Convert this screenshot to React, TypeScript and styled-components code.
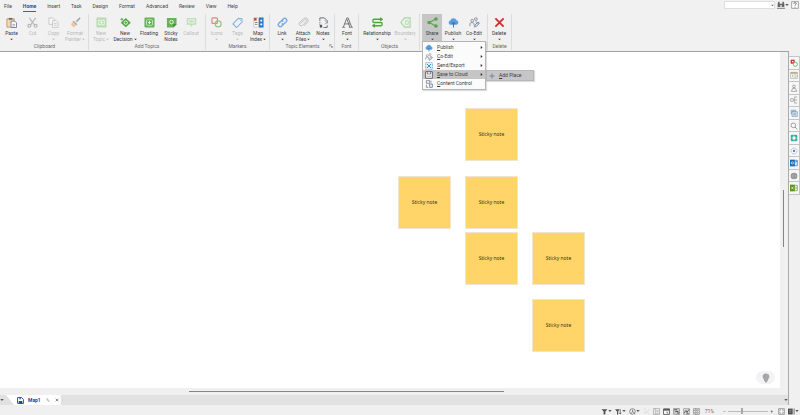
import React from "react";
import styled, { createGlobalStyle } from "styled-components";

const GlobalStyle = createGlobalStyle`
  * { box-sizing: border-box; }
  html, body, #root { height: 100%; }
  body { margin: 0; overflow: hidden; background: #f0f0f0; }
  body, button, input { font-family: Roboto, "Liberation Sans", sans-serif; font-size: 5px; line-height: 7px; color: #3c3c3c; }
  button { border: 0; padding: 0; margin: 0; background: none; }
`;

/* ---------- icons ---------- */

const icons: Record<string, React.ReactNode> = {
  paste: (
    <>
      <path d="M1 2h8v9H1z" fill="#f3d9b4" stroke="#c39a62" />
      <path d="M3 1h4v2H3z" fill="#6d6d6d" />
      <path d="M5.500 4.500h4l2 2v5h-6z" fill="#fff" stroke="#75789a" />
      <path d="M7 8h3M7 9.700h3" stroke="#75789a" strokeWidth=".7" />
    </>
  ),
  cut: (
    <g fill="none" stroke="#b5b5b5" strokeWidth="1.200">
      <path d="M2.500 1l5.800 8M9.500 1L3.700 9" />
      <circle cx="2.600" cy="9.600" r="1.600" />
      <circle cx="9.400" cy="9.600" r="1.600" />
    </g>
  ),
  copy: (
    <g fill="#f7f7f7" stroke="#c2c2c2" strokeWidth=".9">
      <path d="M1 1h4.500L7 2.500V8H1z" />
      <path d="M5 4h4l2 2v5.500H5z" />
      <path d="M6.500 7h3M6.500 9h3" />
    </g>
  ),
  painter: (
    <>
      <path d="M11 1L7 5" stroke="#a7a7b5" strokeWidth="1.800" />
      <path d="M4 4l4 4-1.200 1.200-4-4z" fill="#a9a9b6" />
      <path d="M2.500 5.500l4 4L4 11.500 1 8.500z" fill="#f2c492" />
    </>
  ),
  topic: (
    <>
      <rect x=".5" y=".5" width="11" height="11" rx="1" fill="#b8dbb2" />
      <rect x="3" y="3.500" width="6" height="5" fill="none" stroke="#eef8ec" />
      <path d="M6 4.500v3M4.500 6h3" stroke="#fff" strokeWidth=".8" />
    </>
  ),
  decision: (
    <>
      <path d="M6.300 1.200L11.800 6.200 6.300 11.200.8 6.200z" fill="#55a845" />
      <circle cx="6.300" cy="6.200" r="1.800" fill="none" stroke="#fff" strokeWidth=".9" />
      <path d="M.5 2.500h3M2 1v3" stroke="#55a845" />
    </>
  ),
  floating: (
    <>
      <rect x=".5" y=".5" width="11" height="11" rx="1.500" fill="#66b356" />
      <rect x="2.700" y="3" width="6.600" height="6" rx="1" fill="none" stroke="#dff2da" strokeWidth=".8" />
      <path d="M6 4.300v3.400M4.300 6h3.400" stroke="#fff" strokeWidth=".9" />
    </>
  ),
  sticky: (
    <>
      <path d="M1 1h10.500v7L8 11.500H1z" fill="#66b356" />
      <path d="M8 11.500V8h3.500z" fill="#3f8133" />
      <circle cx="6" cy="5.500" r="2" fill="none" stroke="#e5f5e1" />
    </>
  ),
  callout: (
    <>
      <path d="M.8 1h10.400v7.500H7.500L6 11 4.500 8.500H.8z" fill="#bfdfba" />
      <path d="M3 3h6v3.500H3z" fill="none" stroke="#fff" strokeWidth=".8" />
    </>
  ),
  markers: (
    <g fill="none" strokeWidth="1.300">
      <rect x="1" y="1" width="6" height="6" rx="1" stroke="#df8585" />
      <circle cx="7.800" cy="7.500" r="3.200" stroke="#8fc785" />
    </g>
  ),
  tag: (
    <g fill="none" stroke="#80b4e2" strokeWidth="1.200">
      <path d="M1 7.500L7 1.500l3.800.300.200 3.700-6 6z" />
      <path d="M8.800 3.500l.5.500" />
    </g>
  ),
  mapindex: (
    <>
      <path d="M1 1h5v10H1z" fill="#fff" stroke="#b3b3b3" strokeWidth=".7" />
      <path d="M1 1h3v3H1z" fill="#cf4b4b" />
      <path d="M2 6h3M2 8h3" stroke="#777" />
      <path d="M6.500.5h5v11h-5z" fill="#2b78c5" />
      <path d="M8 3h2v2H8zM8 7h2v2H8z" fill="#fff" />
    </>
  ),
  link: (
    <g fill="none" stroke="#75a9df" strokeWidth="1.500">
      <path d="M5 4l2-2a2.200 2.200 0 013.100 3.100L8 7.200a2.200 2.200 0 01-3 0" />
      <path d="M7 8l-2 2a2.200 2.200 0 01-3.100-3.100L4 4.800a2.200 2.200 0 013 0" />
    </g>
  ),
  attach: (
    <path d="M3 7l4-4a1.400 1.400 0 012 2L4.800 9.200a2.200 2.200 0 01-3.100-3.100l4.500-4.500a3 3 0 014.200 4.200L6.500 9.500" fill="none" stroke="#bcbcbc" />
  ),
  notes: (
    <>
      <path d="M2 3V1h5l3 3v3M10 9v2.500H6" fill="none" stroke="#666" />
      <path d="M2 3v6" stroke="#777" strokeDasharray="1.500 1" />
      <path d="M7.500 3.500l2 2.500-2 2" fill="none" stroke="#7baad1" />
      <path d="M2 8.500h2.500v3H2z" fill="#555" />
    </>
  ),
  font: (
    <g fill="none" stroke="#6b6b6b">
      <path d="M1.500 11L5.300 1h1.400l3.800 10M3 7.500h5.500" />
      <path d="M5.500 2.500L8.500 11" />
      <path d="M0 11.300h3.500M7.500 11.300H12" strokeWidth=".8" />
    </g>
  ),
  relationship: (
    <g fill="none" stroke="#4ea63d" strokeWidth="1.500">
      <path d="M3 2.500h8M9 .8l2 1.700-2 1.700M4.500 2.500H2.200C.5 2.500.5 6 2.200 6h7.600c1.700 0 1.700 3.500 0 3.500H1M3 7.800L1 9.500l2 1.700" />
    </g>
  ),
  boundary: (
    <g fill="none" stroke="#a6d49d" strokeWidth="1.200">
      <path d="M5 1h6v10H5L1 6z" />
      <path d="M6 4h3v4H6z" strokeWidth=".8" />
    </g>
  ),
  share: (
    <g fill="#55a64a" stroke="#55a64a" strokeWidth="1.200">
      <path d="M10 2L2.500 6 10 10" fill="none" />
      <circle cx="9.800" cy="2.200" r="1.300" />
      <circle cx="2.300" cy="6" r="1.300" />
      <circle cx="9.800" cy="9.800" r="1.300" />
    </g>
  ),
  publish: (
    <>
      <path d="M2.800 8.500a2.400 2.400 0 01-.3-4.700A3.600 3.600 0 019.300 3.600a2.500 2.500 0 010 4.900z" fill="#5a9fe0" />
      <path d="M6 11.500V6M4 7.800l2-2.200 2 2.200" fill="none" stroke="#3f78b3" strokeWidth="1.100" />
    </>
  ),
  coedit: (
    <g fill="none" stroke="#8b8f96">
      <circle cx="3.500" cy="4" r="1.500" />
      <circle cx="7.500" cy="2.300" r="1.500" />
      <path d="M1 10V7.500c0-2 4.500-2 4.500 0V9M7 5.500c2 0 3 .5 3 2" />
      <path d="M6 10.800l.5-2L10 5.500l1.300 1.300L8 10.300z" stroke="#5f7f9f" />
    </g>
  ),
  del: <path d="M1.500 1.500l9 9M10.500 1.500l-9 9" stroke="#cf2e2e" strokeWidth="2" />,
  send: (
    <>
      <path d="M1 1h10v10H1z" fill="#edf6fd" stroke="#4e97cf" strokeDasharray="3 1" />
      <path d="M3 3l6 6M9 3L3 9" stroke="#2f86c8" strokeWidth="1.500" />
    </>
  ),
  save: (
    <>
      <path d="M1 1h10v10H1z" fill="#fafafa" stroke="#53565c" strokeWidth="1.300" />
      <path d="M3.500 1v3.500h5V1" fill="none" stroke="#53565c" />
      <path d="M3 8h6" stroke="#888" />
    </>
  ),
  content: (
    <g fill="none" stroke="#7b7b80" strokeWidth="1.200">
      <path d="M2 1h5v4H2zM2 7v4h3" />
      <path d="M7 6h4v5H7z" stroke="#4b7aa5" />
      <path d="M9 1v3" />
    </g>
  ),
  plus: <path d="M6 1v10M1 6h10" stroke="#70809a" strokeWidth="1.800" />,
  mapdoc: (
    <>
      <path d="M1 1h7l3 3v7H1z" fill="#fff" stroke="#24479a" strokeWidth="1.600" />
      <path d="M3 7h6v4H3z" fill="#24479a" />
      <path d="M4 2h3v2H4z" fill="#24479a" />
    </>
  ),
  pin: <path d="M6 .5a4 4 0 014 4c0 2-1.700 3-2 5L6 12 4 9.500c-.3-2-2-3-2-5a4 4 0 014-4z" fill="#a5a5a5" />,
  sideMarkers: (
    <>
      <path d="M1 1h6v6H1z" fill="#c63737" />
      <path d="M3 3h2v2H3z" fill="#fff" />
      <circle cx="8" cy="8" r="3" fill="#fff" stroke="#65a95c" strokeWidth="1.300" />
    </>
  ),
  sideTask: (
    <>
      <path d="M1 2h10v9H1z" fill="#fff" stroke="#a3a3a3" />
      <path d="M1 2h10v2H1z" fill="#b49c6e" />
      <path d="M3 6h2M6 6h3M3 8h2" stroke="#8a8a8a" />
      <path d="M6 8.500l1.500 1.500L11 6.500" fill="none" stroke="#78a86c" />
    </>
  ),
  person: (
    <g fill="none" stroke="#858585">
      <circle cx="6" cy="3.500" r="2" />
      <path d="M2 11l2-4.500h4l2 4.500z" />
    </g>
  ),
  parts: (
    <g fill="none" stroke="#949494">
      <path d="M1 4h4v4H1zM5 6h2M7 1v10M7 1.500h4M7 6h4M7 10.500h4" />
    </g>
  ),
  library: (
    <>
      <path d="M1 1h8v7H1z" fill="#9bbad5" />
      <path d="M3 4h8v7H3z" fill="#dce7f1" stroke="#7195b4" />
      <path d="M5 6.500h4M5 8.500h4" stroke="#7195b4" />
    </>
  ),
  search: (
    <g fill="#fff" stroke="#858585" strokeWidth="1.200">
      <path d="M7.500 7.500l3.500 3.500" />
      <circle cx="5" cy="5" r="3.500" />
    </g>
  ),
  snap: (
    <>
      <rect x="1" y="1" width="10" height="10" rx="2" fill="#35afa6" />
      <circle cx="6" cy="6" r="2.500" fill="#fff" />
      <path d="M6 0v2M6 10v2M0 6h2M10 6h2" stroke="#fff" />
    </>
  ),
  globe: (
    <>
      <circle cx="6" cy="6" r="4.500" fill="none" stroke="#7797b7" strokeDasharray="2 1" />
      <circle cx="6" cy="6" r="1.700" fill="#4983bd" />
    </>
  ),
  outlook: (
    <>
      <path d="M6 2h5v8H6z" fill="#d9e9f7" stroke="#2878bd" />
      <path d="M0 1h7v10H0z" fill="#1769b5" />
      <circle cx="3.500" cy="6" r="1.700" fill="none" stroke="#fff" />
      <path d="M7 5l4-2" stroke="#2878bd" />
    </>
  ),
  web: (
    <>
      <circle cx="6" cy="6" r="5" fill="#8b8b8b" />
      <ellipse cx="6" cy="6" rx="2" ry="4.500" fill="none" stroke="#c6c6c6" strokeWidth=".8" />
      <path d="M1.500 6h9" stroke="#c6c6c6" strokeWidth=".8" />
    </>
  ),
  excel: (
    <>
      <path d="M6 2h5v8H6z" fill="#eaf4dd" stroke="#669c2f" />
      <path d="M0 1h7v10H0z" fill="#56911d" />
      <path d="M2 4l3 4M5 4L2 8" stroke="#fff" />
      <path d="M7 6h4" stroke="#669c2f" />
    </>
  ),
  filter: <path d="M1 2h10L7.500 6v5h-3V6z" fill="#505050" />,
  filter2: (
    <>
      <path d="M0 2h8L5.500 6v5h-2V6z" fill="#505050" />
      <path d="M9 2v8M7.500 8.500L9 10.500l1.500-2" fill="none" stroke="#505050" strokeWidth="1.300" />
    </>
  ),
  clock: (
    <g fill="none" stroke="#606060" strokeWidth="1.200">
      <circle cx="6" cy="6" r="4.800" />
      <path d="M6 3v4l-2.500 2M7 6l3 4" />
    </g>
  ),
  sketch: <path d="M1 10l3-3 2 1 5-6M2 2h3M8 10h3" stroke="#c9c9c9" fill="none" />,
  outline: <path d="M1 1h10v10H1zM4 1v10M5.500 4h4M5.500 6.500h4M5.500 9h4" fill="#fff" stroke="#878787" />,
  calendar: (
    <>
      <path d="M1 1.500h10v9.500H1z" fill="#fff" stroke="#555" strokeWidth="1.500" />
      <path d="M1 3h10" stroke="#555" strokeWidth="3" />
      <path d="M5 7h3v3" stroke="#555" fill="none" />
    </>
  ),
  gantt: (
    <>
      <path d="M1 1h10v10H1z" fill="#ccc" stroke="#777" />
      <path d="M2 3h5M4 6h5M7 8.500h4" stroke="#555" strokeWidth="1.800" />
    </>
  ),
  tree: (
    <>
      <path d="M1 1h10v10H1z" fill="#ddd" stroke="#888" />
      <path d="M2 9l3-5 2 3 4-5M7 5v5h3" stroke="#555" strokeWidth="1.500" fill="none" />
    </>
  ),
  slides: (
    <g fill="#f5f5f5" stroke="#777">
      <path d="M1 1h10v10H1zM4 1v10" />
      <path d="M6 3h3v2H6zM6 7h3v2H6zM1 4h3M1 8h3" />
    </g>
  ),
  fit: (
    <g fill="none" stroke="#747474">
      <path d="M1 1h10v10H1z" />
      <path d="M3 5V3h2M9 7v2H7M3 7v2h2M9 5V3H7" />
    </g>
  ),
  panel: (
    <>
      <path d="M0 1h8v10H0z" fill="#4d4d4d" />
      <path d="M9 1h3v10H9z" fill="#a8a8a8" />
      <path d="M2 4h4M2 7h4" stroke="#bbb" />
    </>
  ),
  binoculars: (
    <>
      <path d="M1 9V4l1-3h2v3h4V1h2l1 3v5H7V6H5v3z" fill="#666" />
      <path d="M0 11h12" stroke="#666" strokeWidth="1.200" />
    </>
  ),
  help: (
    <>
      <path d="M1 1h10v10H1z" fill="#fff" stroke="#777" />
      <path d="M4 4c0-2 4-2 4 0 0 1.500-2 1.300-2 3M6 8.500V10" fill="none" stroke="#555" strokeWidth="1.200" />
    </>
  ),
  caret: <path d="M1 3h10L6 9z" fill="currentColor" />,
  arrow: <path d="M3 0l7 6-7 6z" fill="#222" />,
  launch: <path d="M2 8V2h6M5 5l5 5M10 6v4H6" fill="none" stroke="#555" strokeWidth="1.500" />,
  pencil: <path d="M2 2l2 5 5 4 1-2-4-5z" fill="none" stroke="#777" strokeWidth="1.300" />,
  close: <path d="M2 2l8 8M10 2l-8 8" stroke="#555" strokeWidth="2" />,
};

const Svg = styled.svg<{ $size: number }>`
  display: block;
  flex: none;
  width: ${(p) => p.$size}px;
  height: ${(p) => p.$size}px;
`;

function Icon({ name, size = 11 }: { name: string; size?: number }) {
  return (
    <Svg $size={size} viewBox="0 0 12 12" aria-hidden="true">
      {icons[name]}
    </Svg>
  );
}

/* ---------- header ---------- */

const Page = styled.div`
  display: flex;
  flex-direction: column;
  height: 100vh;
`;

const Header = styled.header`
  position: relative;
  z-index: 2;
  background: #f1f1f1;
`;

const MenuBar = styled.div`
  display: flex;
  justify-content: space-between;
  height: 13px;
`;

const Tabs = styled.nav`
  display: flex;
  gap: 11px;
  padding-left: 4px;
`;

const Tab = styled.button<{ $active?: boolean }>`
  height: 12px;
  padding-top: 1px;
  border-bottom: 1px solid ${(p) => (p.$active ? "#2767c4" : "transparent")};
  color: ${(p) => (p.$active ? "#1d4f9f" : "#444")};
  font-weight: ${(p) => (p.$active ? 700 : 400)};
`;

const Tools = styled.div`
  display: flex;
  align-items: center;
  align-self: flex-start;
  gap: 2px;
  height: 10px;
  padding-right: 1px;
  color: #666;
`;

const SearchBox = styled.div`
  display: flex;
  align-items: center;
  width: 51px;
  height: 8px;
  border: 1px solid #dedede;
  background: #fff;
`;

const SearchInput = styled.input`
  flex: 1;
  min-width: 0;
  height: 6px;
  padding: 0 2px;
  border: 0;
  outline: 0;
  background: transparent;
`;

const IconButton = styled.button`
  display: flex;
  align-items: center;
  color: #555;
`;

const Ribbon = styled.div`
  display: flex;
  height: 38px;
  padding-top: 1px;
`;

const Group = styled.section<{ $width: number; $pad: number }>`
  display: flex;
  flex-direction: column;
  flex: none;
  width: ${(p) => p.$width}px;
  height: 36px;
  border-right: 1px solid #dcdcdc;
  padding-left: ${(p) => p.$pad}px;
`;

const GroupTools = styled.div`
  display: flex;
  height: 28px;
`;

const Tool = styled.button<{ $width: number; $off?: boolean; $open?: boolean }>`
  display: flex;
  flex-direction: column;
  align-items: center;
  flex: none;
  width: ${(p) => p.$width}px;
  height: 28px;
  padding-top: 3px;
  background: ${(p) => (p.$open ? "#c6c6c6" : "transparent")};
  color: ${(p) => (p.$off ? "#b9b9b9" : "#3c3c3c")};
`;

const ToolLabel = styled.span`
  display: flex;
  align-items: center;
  gap: 1px;
  height: 6px;
  white-space: nowrap;
`;

const FirstLine = styled(ToolLabel)`
  margin-top: 2px;
`;

const Caption = styled.div`
  position: relative;
  display: flex;
  justify-content: center;
  height: 8px;
  padding-top: 1px;
  color: #6b6b6b;
  white-space: nowrap;
`;

const Launcher = styled.button`
  position: absolute;
  right: 1px;
  top: 2px;
`;

type ToolDef = { icon: string; lines: string[]; width: number; drop?: boolean; off?: boolean; open?: boolean };
type GroupDef = { name?: string; width: number; pad: number; launcher?: boolean; tools: ToolDef[] };

const groups: GroupDef[] = [
  {
    name: "Clipboard", width: 89, pad: 1,
    tools: [
      { icon: "paste", lines: ["Paste"], width: 21, drop: true },
      { icon: "cut", lines: ["Cut"], width: 21, off: true },
      { icon: "copy", lines: ["Copy"], width: 21, drop: true, off: true },
      { icon: "painter", lines: ["Format", "Painter"], width: 22, drop: true, off: true },
    ],
  },
  {
    name: "Add Topics", width: 117, pad: 0,
    tools: [
      { icon: "topic", lines: ["New", "Topic"], width: 24, drop: true, off: true },
      { icon: "decision", lines: ["New", "Decision"], width: 24, drop: true },
      { icon: "floating", lines: ["Floating"], width: 24 },
      { icon: "sticky", lines: ["Sticky", "Notes"], width: 20 },
      { icon: "callout", lines: ["Callout"], width: 20, off: true },
    ],
  },
  {
    name: "Markers", width: 64, pad: 0,
    tools: [
      { icon: "markers", lines: ["Icons"], width: 21, drop: true, off: true },
      { icon: "tag", lines: ["Tags"], width: 21, drop: true, off: true },
      { icon: "mapindex", lines: ["Map", "Index"], width: 20, drop: true },
    ],
  },
  {
    name: "Topic Elements", width: 65, pad: 1, launcher: true,
    tools: [
      { icon: "link", lines: ["Link"], width: 22, drop: true },
      { icon: "attach", lines: ["Attach", "Files"], width: 20, drop: true },
      { icon: "notes", lines: ["Notes"], width: 20, drop: true },
    ],
  },
  { name: "Font", width: 24, pad: 0, tools: [{ icon: "font", lines: ["Font"], width: 24, drop: true }] },
  {
    name: "Objects", width: 61, pad: 1,
    tools: [
      { icon: "relationship", lines: ["Relationship"], width: 34, drop: true },
      { icon: "boundary", lines: ["Boundary"], width: 22, drop: true, off: true },
    ],
  },
  {
    width: 68, pad: 2,
    tools: [
      { icon: "share", lines: ["Share"], width: 20, drop: true, open: true },
      { icon: "publish", lines: ["Publish"], width: 22, drop: true },
      { icon: "coedit", lines: ["Co-Edit"], width: 20, drop: true },
    ],
  },
  { name: "Delete", width: 24, pad: 0, tools: [{ icon: "del", lines: ["Delete"], width: 22, drop: true }] },
];

function RibbonTool({ tool }: { tool: ToolDef }) {
  const [first, second] = tool.lines;
  return (
    <Tool $width={tool.width} $off={tool.off} $open={tool.open} disabled={tool.off}>
      <Icon name={tool.icon} />
      <FirstLine>{first}</FirstLine>
      <ToolLabel>
        {second}
        {tool.drop && <Icon name="caret" size={3} />}
      </ToolLabel>
    </Tool>
  );
}

/* ---------- share menu ---------- */

const ShareAnchor = styled.div`
  position: relative;
`;

const Menu = styled.div`
  position: absolute;
  top: 27px;
  left: 0;
  z-index: 5;
  width: 64px;
  padding: 1px 0;
  border: 1px solid #b5b5b5;
  background: #fbfbfb;
  box-shadow: 1px 1px 1px #0002;
`;

const MenuItem = styled.button<{ $active?: boolean }>`
  display: flex;
  align-items: center;
  gap: 4px;
  width: 100%;
  height: 9px;
  padding: 0 2px;
  background: ${(p) => (p.$active ? "#c6c6c6" : "transparent")};
  white-space: nowrap;
`;

const MenuText = styled.span`
  flex: 1;
  text-align: left;

  u { text-underline-offset: 1px; }
`;

const SubMenu = styled(Menu)`
  top: 56px;
  left: 64px;
  width: 48px;
  padding: 0;
`;

const menuItems = [
  { icon: "publish", key: "P", rest: "ublish", sub: true },
  { icon: "coedit", key: "C", rest: "o-Edit", sub: true },
  { icon: "send", key: "S", rest: "end/Export", sub: true },
  { icon: "save", key: "S", rest: "ave to Cloud", sub: true, active: true },
  { icon: "content", key: "C", rest: "ontent Control" },
];

function ShareMenu() {
  return (
    <>
      <Menu role="menu">
        {menuItems.map((m) => (
          <MenuItem key={m.rest} $active={m.active} role="menuitem">
            <Icon name={m.icon} size={8} />
            <MenuText><u>{m.key}</u>{m.rest}</MenuText>
            {m.sub && <Icon name="arrow" size={3} />}
          </MenuItem>
        ))}
      </Menu>
      <SubMenu role="menu">
        <MenuItem $active role="menuitem">
          <Icon name="plus" size={6} />
          <MenuText><u>A</u>dd Place</MenuText>
        </MenuItem>
      </SubMenu>
    </>
  );
}

/* ---------- work area ---------- */

const Body = styled.div`
  display: flex;
  flex: 1;
  min-height: 0;
`;

const Work = styled.div`
  display: flex;
  flex-direction: column;
  flex: 1;
  min-width: 0;
  border-top: 1px solid #a5a1a1;
  border-right: 1px solid #aaa;
`;

const CanvasRow = styled.div`
  display: flex;
  flex: 1;
  min-height: 0;
`;

const Canvas = styled.main`
  position: relative;
  flex: 1;
  overflow: hidden;
  background: #fff;
`;

const Note = styled.div<{ $x: number; $y: number }>`
  position: absolute;
  left: ${(p) => p.$x}px;
  top: ${(p) => p.$y}px;
  display: flex;
  align-items: center;
  justify-content: center;
  width: 53px;
  height: 53px;
  border: 1px solid #efe6d0;
  background: #ffd468;
  color: #3e3520;
  font-family: "Noto Sans", "Open Sans", sans-serif;
`;

const PinButton = styled.button`
  position: absolute;
  right: 5px;
  bottom: 4px;
  display: flex;
  align-items: center;
  justify-content: center;
  width: 19px;
  height: 13px;
  border-radius: 7px;
  background: #f3f3f5;
`;

const VScroll = styled.div`
  width: 8px;
  padding: 138px 3px 0;
  background: #f0f0f0;
`;

const VThumb = styled.div`
  width: 1px;
  height: 57px;
  background: #858585;
`;

const HScroll = styled.div`
  height: 7px;
  padding-top: 3px;
  background: #f0f0f0;
`;

const HThumb = styled.div`
  width: 40%;
  height: 1px;
  margin-left: 24%;
  background: #858585;
`;

const DocBar = styled.div`
  display: flex;
  justify-content: space-between;
  align-items: center;
  height: 10px;
  background: #e1e1e1;
  color: #777;
`;

const DocTabs = styled.div`
  display: flex;
  align-items: center;
  height: 10px;
`;

const DocTab = styled.div`
  display: flex;
  align-items: center;
  gap: 5px;
  height: 10px;
  margin-left: 2px;
  padding: 0 2px 0 11px;
  background: #fff;
  color: #24479a;
  clip-path: polygon(0 0, 100% 0, 100% 100%, 8px 100%);
`;

const DocName = styled.button`
  display: flex;
  align-items: center;
  gap: 4px;
  color: #24479a;
  font-weight: 700;
`;

const Side = styled.aside`
  display: flex;
  flex-direction: column;
  width: 11px;
  padding-top: 5px;
  background: #f0f0f0;
`;

const SideTabs = styled.div`
  display: flex;
  flex-direction: column;
  height: 139px;
  border-top: 1px solid #c4c4c4;
`;

const SideTab = styled.button`
  display: flex;
  flex: 1;
  align-items: center;
  justify-content: center;
  border-right: 1px solid #c4c4c4;
  border-bottom: 1px solid #c4c4c4;
  background: #f7f7f7;
`;

const sideIcons: [string, string][] = [
  ["sideMarkers", "Markers"], ["sideTask", "Task info"], ["person", "Resources"], ["parts", "Map parts"],
  ["library", "Library"], ["search", "Search"], ["snap", "Snap"], ["globe", "Browser"],
  ["outlook", "Outlook"], ["web", "Web"], ["excel", "Excel"],
];

const notes: [number, number][] = [[465, 56], [398, 124], [465, 124], [465, 180], [532, 180], [532, 247]];

/* ---------- status bar ---------- */

const StatusBar = styled.footer`
  display: flex;
  align-items: center;
  justify-content: flex-end;
  gap: 3px;
  height: 10px;
  padding: 2px 1px 0 0;
  background: #f0f0f0;
  color: #666;
`;

const Dropdowns = styled.div`
  display: flex;
  gap: 3px;
`;

const Views = styled.div`
  display: flex;
  gap: 3px;
`;

const ZoomValue = styled.span`
  width: 12px;
  text-align: center;
`;

const ZoomGroup = styled.div`
  display: flex;
  align-items: center;
  gap: 2px;
  margin: 0 2px 0 5px;
`;

const ZoomSlider = styled.input`
  width: 40px;
  height: 7px;
  margin: 0;
  appearance: none;
  background: linear-gradient(#bcbcbc, #bcbcbc) center / 100% 1px no-repeat;

  &::-webkit-slider-thumb {
    appearance: none;
    width: 2px;
    height: 6px;
    background: #aaa;
  }
`;

const tabNames = ["File", "Home", "Insert", "Task", "Design", "Format", "Advanced", "Review", "View", "Help"];

export default function App() {
  return (
    <Page>
      <GlobalStyle />
      <Header>
        <MenuBar>
          <Tabs>
            {tabNames.map((t) => <Tab key={t} $active={t === "Home"}>{t}</Tab>)}
          </Tabs>
          <Tools>
            <SearchBox>
              <SearchInput type="text" aria-label="Search" />
              <Icon name="caret" size={3} />
            </SearchBox>
            <IconButton aria-label="Find"><Icon name="binoculars" size={8} /><Icon name="caret" size={4} /></IconButton>
            <IconButton aria-label="Help"><Icon name="help" size={8} /></IconButton>
          </Tools>
        </MenuBar>
        <Ribbon>
          {groups.map((g) => (
            <Group key={g.tools[0].icon} $width={g.width} $pad={g.pad}>
              <GroupTools>
                {g.tools.map((t) =>
                  t.open ? (
                    <ShareAnchor key={t.icon}>
                      <RibbonTool tool={t} />
                      <ShareMenu />
                    </ShareAnchor>
                  ) : (
                    <RibbonTool key={t.icon} tool={t} />
                  )
                )}
              </GroupTools>
              {g.name && (
                <Caption>
                  {g.name}
                  {g.launcher && <Launcher aria-label="Topic element options"><Icon name="launch" size={4} /></Launcher>}
                </Caption>
              )}
            </Group>
          ))}
        </Ribbon>
      </Header>
      <Body>
        <Work>
          <CanvasRow>
            <Canvas>
              {notes.map(([x, y]) => <Note key={`${x}-${y}`} $x={x} $y={y}>Sticky note</Note>)}
              <PinButton aria-label="Tips"><Icon name="pin" size={10} /></PinButton>
            </Canvas>
            <VScroll><VThumb /></VScroll>
          </CanvasRow>
          <HScroll><HThumb /></HScroll>
          <DocBar>
            <DocTabs>
              <IconButton aria-label="All maps"><Icon name="caret" size={4} /></IconButton>
              <DocTab>
                <DocName><Icon name="mapdoc" size={7} />Map1</DocName>
                <Icon name="pencil" size={4} />
                <IconButton aria-label="Close map"><Icon name="close" size={4} /></IconButton>
              </DocTab>
            </DocTabs>
            <IconButton aria-label="More maps"><Icon name="caret" size={4} /></IconButton>
          </DocBar>
        </Work>
        <Side>
          <SideTabs>
            {sideIcons.map(([icon, label]) => (
              <SideTab key={icon} aria-label={label}><Icon name={icon} size={8} /></SideTab>
            ))}
          </SideTabs>
        </Side>
      </Body>
      <StatusBar>
        <Dropdowns>
          {["filter", "filter2", "clock"].map((n) => (
            <IconButton key={n} aria-label={n}><Icon name={n} size={7} /><Icon name="caret" size={4} /></IconButton>
          ))}
        </Dropdowns>
        <Views>
          {["sketch", "outline", "calendar", "gantt", "tree", "slides"].map((n) => (
            <IconButton key={n} aria-label={n}><Icon name={n} size={7} /></IconButton>
          ))}
        </Views>
        <ZoomValue>71%</ZoomValue>
        <ZoomGroup>
          <IconButton aria-label="Zoom out">−</IconButton>
          <ZoomSlider type="range" aria-label="Zoom" min={0} max={100} defaultValue={34} />
          <IconButton aria-label="Zoom in">+</IconButton>
        </ZoomGroup>
        <IconButton aria-label="Fit map"><Icon name="fit" size={7} /></IconButton>
        <IconButton aria-label="Task panes"><Icon name="panel" size={7} /><Icon name="caret" size={4} /></IconButton>
      </StatusBar>
    </Page>
  );
}
